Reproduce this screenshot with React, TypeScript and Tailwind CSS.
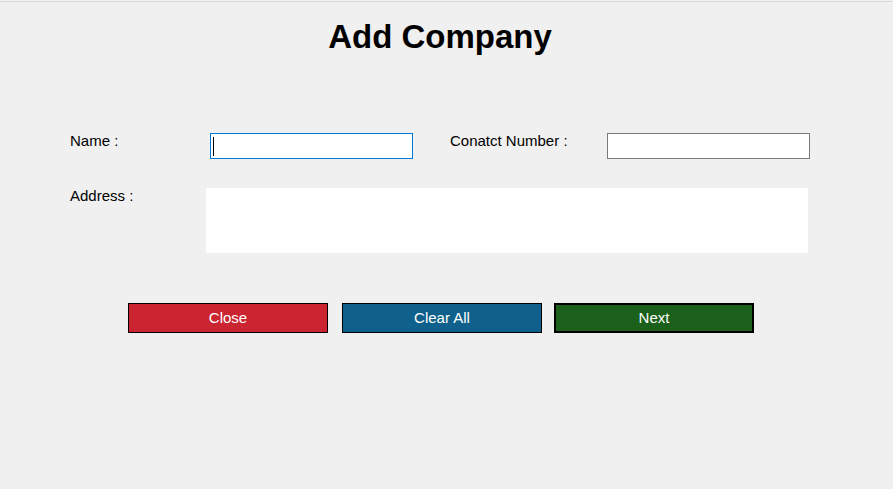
import React from "react";

const font = { fontFamily: '"Liberation Sans", Arial, sans-serif' };

const App = () => {
  return (
    <div
      className="min-h-[489px] w-full bg-[#f0f0f0] text-black font-['Liberation_Sans',Arial,sans-serif]"
      style={font}
    >
      <div className="h-[2px] border-b border-[#dadada]"></div>

      <div className="mt-[16px] flex justify-center pr-[13px]">
        <h1 className="text-[33px] leading-[38px] font-bold">Add Company</h1>
      </div>

      <div className="mt-[76px] pl-[70px]">
        <div className="flex items-start">
          <label className="w-[140px] text-[15px] leading-[18px]">Name :</label>
          <div className="mt-px flex h-[26px] w-[203px] items-center border border-[#0078d7] bg-white pl-[2px]">
            <div className="h-[19px] w-px bg-black"></div>
          </div>
          <label className="ml-[37px] w-[157px] text-[15px] leading-[18px]">
            Conatct Number :
          </label>
          <div className="mt-px h-[26px] w-[203px] border border-[#7a7a7a] bg-white"></div>
        </div>

        <div className="mt-[28px] flex items-start">
          <label className="w-[136px] text-[15px] leading-[18px]">Address :</label>
          <div className="mt-px h-[65px] w-[602px] bg-white"></div>
        </div>
      </div>

      <div className="mt-[50px] flex items-center pl-[128px]">
        <button className="h-[30px] w-[200px] border border-black bg-[#cc2532] text-[15px] text-white">
          Close
        </button>
        <button className="ml-[14px] h-[30px] w-[200px] border border-black bg-[#0f618b] text-[15px] text-white">
          Clear All
        </button>
        <button className="ml-[12px] h-[30px] w-[200px] border-2 border-black bg-[#1b601b] text-[15px] text-white">
          Next
        </button>
      </div>
    </div>
  );
};

export default App;
